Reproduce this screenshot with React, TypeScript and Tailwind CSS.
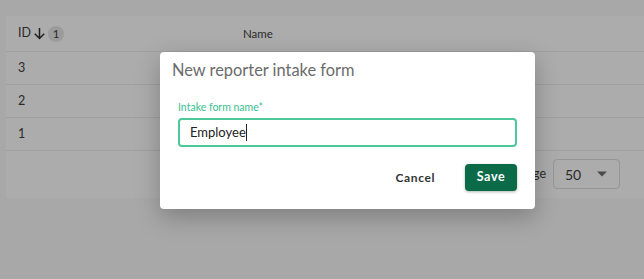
import React from "react";

export default function App() {
  const rows = ["3", "2", "1"];
  return (
    <div
      className="relative w-[644px] h-[279px] overflow-hidden bg-[#a8a8a8] text-[#333]"
      style={{ fontFamily: "Lato, 'Noto Sans', sans-serif" }}
    >
      <div className="pt-[16px] pl-[6px]">
        <div className="bg-[#acacac] h-[182px]">
          <div className="flex items-center h-[36px] border-b border-[#9f9f9f] text-[12px] text-[#2a2a2a]">
            <div className="w-[237px] pl-[12px] flex items-center">
              <span className="text-[12.5px]">ID</span>
              <svg width="15" height="15" viewBox="0 0 24 24" className="ml-[1px]">
                <path d="M12 3v17M4.5 12.5l7.5 7.5 7.5-7.5" fill="none" stroke="#1f1f1f" strokeWidth="2.4" />
              </svg>
              <span className="ml-[1px] w-[16px] h-[16px] rounded-full bg-[#9b9b9b] flex items-center justify-center text-[11.5px]">1</span>
            </div>
            <div className="text-[11.5px]">Name</div>
          </div>
          {rows.map((r) => (
            <div key={r} className="flex items-center h-[33px] border-b border-[#9f9f9f] pl-[12px] text-[12.5px] text-[#2a2a2a]">
              {r}
            </div>
          ))}
          <div className="flex items-center justify-end h-[46px] pr-[24px] text-[12.5px] text-[#2a2a2a]">
            <span className="mr-[7px]">Rows per page</span>
            <div className="w-[67px] h-[30px] border border-[#959595] rounded-[4px] flex items-center justify-between pl-[11px] pr-[12px] text-[14px]">
              <span>50</span>
              <svg width="10" height="6" viewBox="0 0 10 5">
                <path d="M0 0h10L5 5z" fill="#4a4a4a" />
              </svg>
            </div>
          </div>
        </div>
      </div>

      <div className="absolute left-[160px] top-[52px] w-[375px] h-[157px] bg-white rounded-[4px] shadow-[0_8px_24px_rgba(0,0,0,0.25)]">
        <div className="pl-[12px] pt-[7px] text-[16.4px] text-[#6b6b6b] leading-[22px]">
          New reporter intake form
        </div>
        <div className="px-[18px] pt-[20px]">
          <div className="text-[10.5px] leading-[13px] text-[#39c08e]">Intake form name*</div>
          <div className="mt-[4px] h-[29px] border-2 border-[#4cc89a] rounded-[4px] flex items-center pl-[10px] text-[13px] text-[#222]">
            <span>Employee</span>
            <span className="w-[1px] h-[17px] bg-[#222]" />
          </div>
          <div className="mt-[17px] flex items-center justify-end">
            <button className="mr-[30px] text-[12px] font-bold tracking-[0.05em] text-[#333]">Cancel</button>
            <button className="w-[52px] h-[27px] rounded-[4px] bg-[#0b6b49] text-white text-[12.5px] font-bold tracking-[0.05em] shadow-[0_1px_3px_rgba(0,0,0,0.3)]">
              Save
            </button>
          </div>
        </div>
      </div>
    </div>
  );
}
